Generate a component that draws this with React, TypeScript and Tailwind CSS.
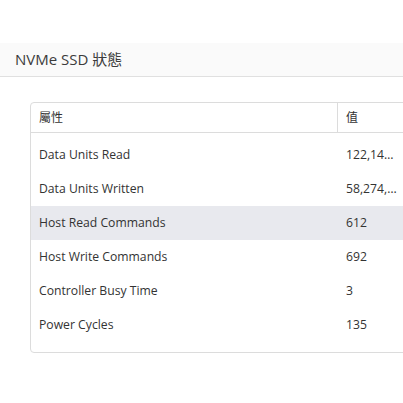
import React from 'react';

// ── Datos ─────────────────────────────────────────────────────────────────────

const rows = [
    { name: 'Data Units Read',       value: '122,145,338' },
    { name: 'Data Units Written',    value: '58,274,906' },
    { name: 'Host Read Commands',    value: '612' },
    { name: 'Host Write Commands',   value: '692' },
    { name: 'Controller Busy Time',  value: '3' },
    { name: 'Power Cycles',          value: '135' },
];

const font = { fontFamily: '"Open Sans", "Noto Sans CJK TC", sans-serif' };

// ── Componente principal ──────────────────────────────────────────────────────

const App: React.FC = () => {
    const hovered = 2;

    return (
        <div className="w-[403px] h-[403px] overflow-hidden bg-white text-[#333]" style={font}>

            {/* ── HEADER ─────────────────────────────────────────────────── */}
            <div className="mt-[43px] h-[34px] bg-[#fafafa] border-b border-[#e0e0e0] flex items-center px-[15px]">
                <span className="text-[15px] text-[#3c3c3c]">NVMe SSD 狀態</span>
            </div>

            {/* ── TABLA ──────────────────────────────────────────────────── */}
            <div className="ml-[30px] mt-[25px] w-[390px] border border-[#dcdcdc] rounded-[4px] pb-[10px]">
                <div className="grid grid-cols-[307px_1fr] h-[30px] border-b border-[#dcdcdc] text-[12px]">
                    <div className="pl-2 flex items-center border-r border-[#dcdcdc]">屬性</div>
                    <div className="pl-2 flex items-center">值</div>
                </div>
                <div className="pt-[5px]">
                    {rows.map((r, i) => (
                        <div key={r.name}
                            className={`grid grid-cols-[307px_1fr] h-[34px] text-[12.2px] ${i === hovered ? 'bg-[#e8e9ee]' : ''}`}>
                            <div className="pl-2 flex items-center">{r.name}</div>
                            <div className="pl-2 flex items-center">
                                <span className="block w-[52px] truncate">{r.value}</span>
                            </div>
                        </div>
                    ))}
                </div>
            </div>
        </div>
    );
};

export default App;
